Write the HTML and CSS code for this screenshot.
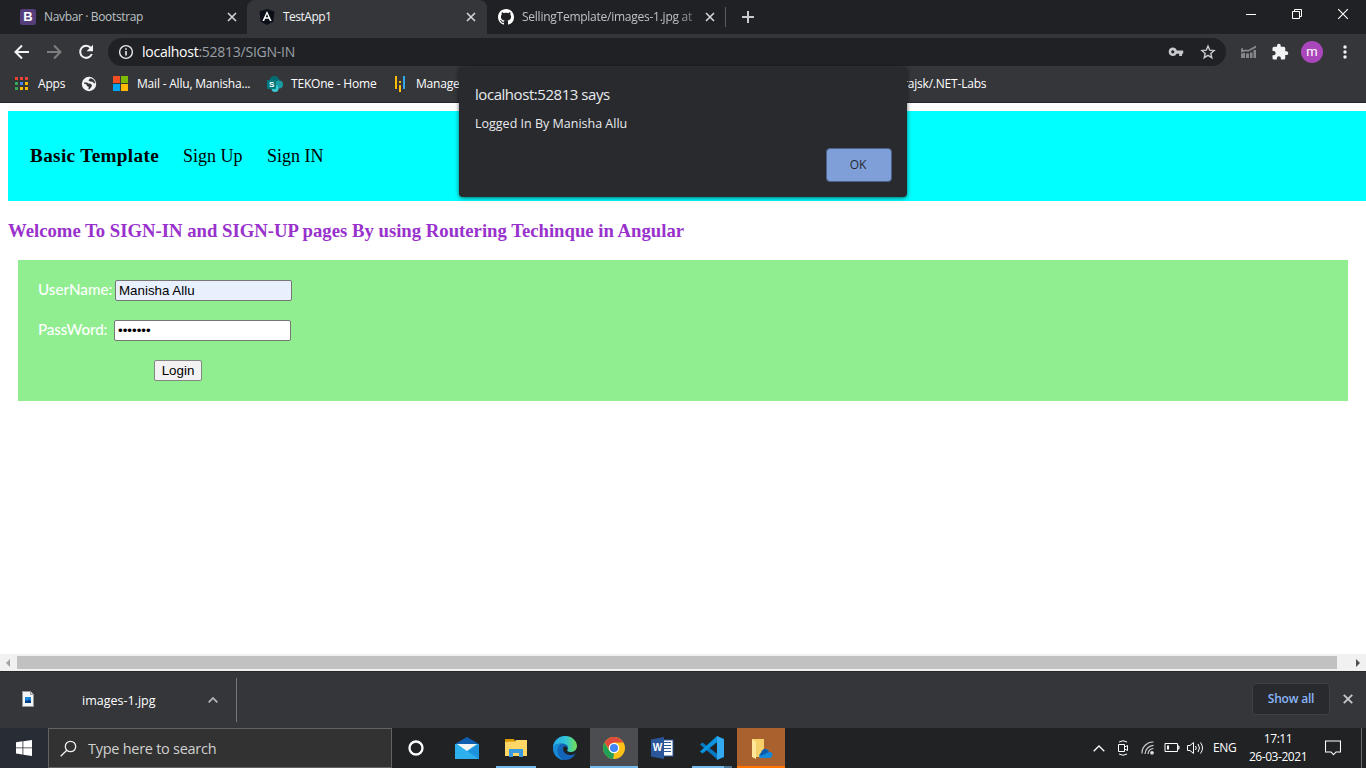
FILE: index.html
```html
<!DOCTYPE html>
<html lang="en">
<head>
<meta charset="utf-8">
<title>TestApp1</title>
<link rel="stylesheet" href="styles.css">
</head>
<body>
<header class="tabs">
  <div class="tab">
    <svg width="16" height="16" viewBox="0 0 16 16"><rect width="16" height="16" rx="2.5" fill="#563d7c"/></svg>
    <b class="boot">B</b><span class="t-nav">Navbar · Bootstrap</span>
    <svg class="x" viewBox="0 0 10 10"><path d="M1 1l8 8M9 1l-8 8"/></svg>
  </div>
  <div class="tab active">
    <svg width="16" height="16" viewBox="0 0 16 16"><path fill="#0b0f18" d="M8 0l7.5 2.6-1.1 10L8 16l-6.400-3.400L.5 2.600z"/><path fill="#fff" fill-rule="evenodd" d="M8 2l4.600 10h-1.800l-.9-2.200H6.100L5.200 12H3.400zM8 5L6.700 8.300h2.600z"/></svg>
    <span class="t-test">TestApp1</span>
    <svg class="x" viewBox="0 0 10 10"><path d="M1 1l8 8M9 1l-8 8"/></svg>
  </div>
  <div class="tab third">
    <svg width="16" height="16" viewBox="0 0 16 16"><path fill="#fff" d="M8 0C3.580 0 0 3.580 0 8c0 3.540 2.290 6.530 5.470 7.590.4.070.55-.17.55-.38 0-.19-.01-.82-.01-1.490-2.010.37-2.530-.49-2.690-.94-.09-.23-.48-.94-.82-1.130-.28-.15-.68-.52-.01-.53.63-.01 1.080.58 1.230.82.72 1.210 1.870.87 2.330.66.070-.52.28-.87.510-1.070-1.780-.2-3.640-.89-3.640-3.950 0-.87.310-1.590.82-2.150-.08-.2-.36-1.020.08-2.120 0 0 .67-.21 2.200.82.640-.18 1.320-.27 2-.27s1.360.09 2 .27c1.530-1.040 2.200-.82 2.200-.82.44 1.100.16 1.920.08 2.120.51.56.82 1.270.82 2.150 0 3.070-1.870 3.750-3.650 3.950.29.25.54.73.54 1.480 0 1.070-.01 1.930-.01 2.200 0 .21.15.46.55.38A8.010 8.010 0 0 0 16 8c0-4.420-3.580-8-8-8z"/></svg>
    <span class="t-sell">SellingTemplate/images-1.jpg at</span>
    <svg class="x" viewBox="0 0 10 10"><path d="M1 1l8 8M9 1l-8 8"/></svg>
  </div>
  <i class="tabsep"></i>
  <svg class="plus" width="12" height="12" viewBox="0 0 12 12"><path d="M6 0v12M0 6h12" stroke="#c8cacd" stroke-width="2"/></svg>
  <div class="win">
    <svg width="46" height="28"><path d="M18 14.500h10" stroke="#fff"/></svg>
    <svg width="46" height="28" fill="none" stroke="#fff"><path d="M18.500 11.500h7v7h-7zM20.500 11.500v-2h7v7h-2"/></svg>
    <svg width="46" height="28"><path d="M18.200 9.200l9.600 9.600M27.800 9.200l-9.600 9.600" stroke="#fff" stroke-width="1.100"/></svg>
  </div>
</header>
<div class="toolbar">
  <svg class="navi" viewBox="0 0 32 32"><path d="M23 16H10M16 9.500L9.500 16l6.500 6.500" fill="none" stroke="#f1f3f4" stroke-width="2"/></svg>
  <svg class="navi" viewBox="0 0 32 32"><path d="M9 16h13M16 9.500l6.500 6.500-6.500 6.500" fill="none" stroke="#7d7e80" stroke-width="2"/></svg>
  <svg class="navi" viewBox="0 0 32 32"><path d="M20.800 12A6 6 0 1 0 21.800 18" fill="none" stroke="#f1f3f4" stroke-width="2"/><path d="M23 8.800v6.500h-6.500z" fill="#f1f3f4"/></svg>
  <div class="omni">
    <svg width="16" height="16" viewBox="0 0 16 16"><circle cx="8" cy="8" r="6.400" fill="none" stroke="#e8eaed" stroke-width="1.400"/><path d="M8 7v4.500M8 4.300v1.500" stroke="#e8eaed" stroke-width="1.600"/></svg>
    <span class="url"><b>localhost</b>:52813/SIGN-IN</span>
    <svg class="key" width="16" height="16" viewBox="0 0 16 16"><path fill="#c8cacd" fill-rule="evenodd" d="M4.800 3.500a4.200 4.200 0 0 1 4 3H15.200v3.200H14V12h-2.800V9.700H8.600a4.200 4.200 0 1 1-3.800-6.200zm0 2.700a1.600 1.600 0 1 0 0 3.200 1.600 1.600 0 0 0 0-3.200z"/></svg>
    <svg width="16" height="16" viewBox="0 0 16 16"><path fill="none" stroke="#c8cacd" stroke-width="1.400" d="M8 2l1.700 4.100 4.400.4-3.300 2.900 1 4.300L8 11.400l-3.800 2.300 1-4.300-3.300-2.900 4.400-.4z"/></svg>
  </div>
  <svg class="ext" width="16" height="16" viewBox="0 0 16 16"><path fill="#85878a" d="M1 9.500L5 8.800V14H1zM6 9.500h3V14H6zM10 8.500h2.500V14H10zM13.500 6H16v8h-2.500zM1 4.500L3 4v2l3.500-.5 1.500.5 8-4.500v2.200L8 7.700l-2-.5-5 1.300z"/></svg>
  <svg class="puz" width="18" height="18" viewBox="0 0 24 24"><path fill="#f1f3f4" d="M20.500 11H19V7a2 2 0 0 0-2-2h-4V3.500a2.500 2.500 0 0 0-5 0V5H4a2 2 0 0 0-2 2v3.800h1.500a2.700 2.700 0 0 1 0 5.400H2V20a2 2 0 0 0 2 2h3.800v-1.500a2.700 2.700 0 0 1 5.400 0V22H17a2 2 0 0 0 2-2v-4h1.500a2.500 2.500 0 0 0 0-5z"/></svg>
  <div class="avatar">m</div>
  <svg class="dots" width="4" height="14" fill="#f1f3f4"><circle cx="2" cy="2" r="1.700"/><circle cx="2" cy="7" r="1.700"/><circle cx="2" cy="12" r="1.700"/></svg>
</div>
<div class="marks">
  <svg class="grid" width="13" height="14"><path fill="#ea4335" d="M0 0h3v3H0zM5 0h3v3H5zM10 0h3v3h-3z"/><path fill="#34a853" d="M0 5h3v3H0z"/><path fill="#4285f4" d="M5 5h3v3H5z"/><path fill="#fbbc05" d="M10 5h3v3h-3zM5 10h3v3H5zM10 10h3v3h-3z"/><path fill="#34a853" d="M0 10h3v3H0z"/></svg>
  <span class="m-apps">Apps</span>
  <svg class="globe" width="16" height="16" viewBox="0 0 16 16"><circle cx="8" cy="8" r="7.200" fill="#f1f3f4"/><path fill="#35363a" d="M3 6.500h3l1.500 1 2 .2 1.500 1.300-.5 1.800-2 2.400H7.300L7.800 11 6 10 5.500 8.500 3 7.500zM9 2.200L7.500 4.500 9 5.500l2.500.3 1.500 1.500h1.200C14 4.500 12 2.500 9 2.200z"/></svg>
  <svg class="ms" width="15" height="15"><path fill="#f25022" d="M0 0h7v7H0z"/><path fill="#7fba00" d="M8 0h7v7H8z"/><path fill="#00a4ef" d="M0 8h7v7H0z"/><path fill="#ffb900" d="M8 8h7v7H8z"/></svg>
  <span class="m-mail">Mail - Allu, Manisha...</span>
  <span class="sp"><svg width="16" height="16" viewBox="0 0 16 16"><circle cx="7.500" cy="5" r="5" fill="#036c70"/><circle cx="12" cy="8.500" r="4" fill="#1a9ba1"/><circle cx="8" cy="12.500" r="3.500" fill="#37c6d0"/><rect y="4" width="9" height="9" rx="1" fill="#03787c"/></svg><b>S</b></span>
  <span class="m-tek">TEKOne - Home</span>
  <svg class="bars" width="10" height="16"><path fill="#fbbc05" d="M0 0h2v13H0zM4 5h2v2H4zM4 9h2v7H4z"/><path fill="#35a7e8" d="M8 0h2v13H8z"/></svg>
  <span class="m-man">Manage</span>
  <span class="m-net">rajsk/.NET-Labs</span>
</div>
<main class="page">
  <nav class="sitenav"><b>Basic Template</b><span class="up">Sign Up</span><span class="in">Sign IN</span></nav>
  <h3>Welcome To SIGN-IN and SIGN-UP pages By using Routering Techinque in Angular</h3>
  <form class="login">
    <div class="row"><label class="l-user">UserName:</label><input class="auto" type="text" value="Manisha Allu"></div>
    <div class="row"><label class="l-pass">PassWord:</label><input type="password" value="manisha"></div>
    <button type="button">Login</button>
  </form>
  <div class="hscroll">
    <svg width="17" height="17"><path fill="#a3a3a3" d="M10 5v8L6 9z"/></svg><i></i><svg width="17" height="17"><path fill="#505050" d="M7 5v8l4-4z"/></svg>
  </div>
</main>
<div class="downloads">
  <svg class="file" width="12" height="16"><path fill="#f4f4f4" stroke="#999" d="M.5.5h8l3 3v12H.5z"/><path d="M8.500.5v3h3" fill="#ddd" stroke="#999"/><rect x="3" y="6" width="6" height="6" fill="#1b85d8"/><path d="M3 12V9l2 1 2-1.500L9 10v2z" fill="#093c83"/></svg>
  <span class="d-name">images-1.jpg</span>
  <svg class="chev" width="10" height="6"><path d="M.7 5.300L5 1l4.300 4.300" fill="none" stroke="#b8babd" stroke-width="1.700"/></svg>
  <i></i>
  <div class="showall"><span>Show all</span></div>
  <svg class="dx" width="10" height="10"><path d="M.8.8l8.400 8.400M9.200.8L.8 9.200" stroke="#c5c7ca" stroke-width="1.900"/></svg>
</div>
<footer class="taskbar">
  <div class="start"><svg width="16" height="16"><path fill="#fff" d="M0 2.200L6.500 1.300v6.200H0zM7.300 1.200L16 0v7.500H7.300zM0 8.300h6.500v6.200L0 13.600zM7.300 8.300H16V16l-8.700-1.200z"/></svg></div>
  <div class="search"><svg width="17" height="17" fill="none" stroke="#eee" stroke-width="1.300"><circle cx="10.500" cy="6.500" r="5.200"/><path d="M6.800 10.200L.7 16.300"/></svg><span>Type here to search</span></div>
  <div class="app cort"><svg width="16" height="16"><circle cx="8" cy="8" r="6.500" fill="none" stroke="#fff" stroke-width="2.300"/></svg></div>
  <div class="app mail"><svg width="24" height="24"><path fill="#2eb0ed" d="M0 8h24v15H0z"/><path fill="#0f5eaf" d="M0 8l12-7 12 7z"/><path fill="#1c93dc" d="M24 8v15L12 15z"/><path fill="#f4f4f4" d="M2 8h20l-10 7z"/></svg></div>
  <div class="app folder"><svg width="24" height="24"><path fill="#d99a00" d="M1 3h9l1 2v2H1z"/><path fill="#ffd766" d="M1 6l10-.5L12 4h11v16H1z"/><path fill="#3b9be0" d="M5 13h14v8h-4v-4H9v4H5z"/></svg></div>
  <div class="app edge"><svg width="24" height="24" viewBox="0 0 24 24"><defs><linearGradient id="g1"><stop stop-color="#26a8e8"/><stop offset=".55" stop-color="#32c7d6"/><stop offset="1" stop-color="#75df4d"/></linearGradient></defs><circle cx="12" cy="12" r="12" fill="#1265b8"/><path fill="url(#g1)" d="M0 11C1 4 6 0 12 0c7 0 12 5 12 10 0 4-3 6-6.500 6-3 0-4-1.200-3-2.400C16.500 10 13 7.500 9 7.500c-4 0-8 2-9 5z"/><path fill="#1889d5" d="M0 12c1-4 4.500-5 8-4-5 3-5 11 2 16C4 23 0 18 0 12z"/><path fill="#202326" d="M10.500 11c-1.500 3 .5 7.500 6 8 3 .2 5-.5 6.300-1.500L25 16v-5h-1c-1 4-3 5-6.500 5-3 0-4-1.200-3-2.400 1-2-2.500-4.600-4-2.600z"/></svg></div>
  <div class="app chrome"><svg width="22" height="22" viewBox="0 0 22 22"><circle cx="11" cy="11" r="11" fill="#fbc116"/><path fill="#de4b3c" d="M1.500 5.500a11 11 0 0 1 19 0H11l-4 8z"/><path fill="#21a157" d="M1.500 5.500L6.300 13.700 11 16.400 10.200 22A11 11 0 0 1 1.500 5.500z"/><circle cx="11" cy="11" r="5.300" fill="#fff"/><circle cx="11" cy="11" r="4" fill="#4285f4"/></svg></div>
  <div class="app word"><svg width="23" height="22"><rect x="10" y="3" width="12" height="16" fill="#fff" stroke="#2b579a"/><path stroke="#2b579a" d="M13 5.500h7M13 8.500h7M13 11.500h7M13 14.500h7"/><path fill="#2b579a" d="M0 2.500L13 0v22L0 19.500z"/></svg><b>W</b></div>
  <div class="app code"><svg width="24" height="24" viewBox="0 0 24 24"><path fill="#087ac4" d="M0 8.500L2.500 6.500 18 18.500V24z"/><path fill="#0a93df" d="M0 15.500L17 0l1 5.500L2.500 17.500z"/><path fill="#33a9ef" d="M17 0l7 3v18l-7 3z"/></svg></div>
  <div class="app drive"><svg width="24" height="24"><path fill="#f5cf67" d="M3 3h12v18H3z"/><path fill="#ffe69b" d="M3 3l4 3v17l-4-2z"/><path fill="#1689d8" d="M11 22c-2-2-.5-5 2-5 1-5 6-5 7-1 3-.3 3.500 1.500 3.500 3S22 22 20.500 22z"/><path fill="#0b5cad" d="M12 17c1-5 6-5 8-1l-8 4c-1-1-1-3 0-3z"/></svg></div>
  <div class="tray">
    <svg class="up1" width="12" height="7"><path d="M.7 6.200L6 1l5.300 5.200" fill="none" stroke="#fff" stroke-width="1.300"/></svg>
    <svg class="meet" width="12" height="16" fill="none" stroke="#fff"><path d="M2 2q4-2.500 8 0M2 14q4 2.500 8 0M1.500 4.500h6v7h-6zM7.500 7l3-1.500v5L7.500 9"/></svg>
    <svg class="wifi" width="14" height="14" fill="none" stroke="#ccc" stroke-width="1.200"><path d="M1 12.500A11 11 0 0 1 12.500 1M4 13A9 9 0 0 1 12.500 4.300M7 13a6 6 0 0 1 5.500-5.500"/><circle cx="11" cy="11.800" r="1.300" fill="#fff"/></svg>
    <svg class="bat" width="16" height="10" fill="none" stroke="#fff"><path d="M1 .5h12.500v8H1zM14 3h1v3h-1z"/><path fill="#fff" stroke="none" d="M3 2.500h2v4H3z"/></svg>
    <svg class="vol" width="17" height="14" fill="none" stroke="#fff"><path d="M.5 4.500h2.500L6.500 1.500v11L3 9.500H.5zM8.500 5q1.500 2 0 4M11 3q3 4 0 8M13.500 1.500q4 5.500 0 11"/></svg>
    <span class="eng">ENG</span>
    <div class="clock"><span class="time">17:11</span><span class="date">26-03-2021</span></div>
    <svg class="note" width="16" height="16"><path d="M.5 1h15v11H11l-2.500 2.700L6 12H.5z" fill="none" stroke="#fff" stroke-width="1.100"/></svg>
    <i class="peek"></i>
  </div>
</footer>
<div class="dialog">
  <p class="says">localhost:52813 says</p>
  <p class="msg">Logged In By Manisha Allu</p>
  <div class="ok">OK</div>
</div>
</body>
</html>
```
FILE: styles.css
```css
* { box-sizing: border-box; }
body { margin: 0; width: 1366px; height: 768px; overflow: hidden; display: flex; flex-direction: column; position: relative; background: #fff; font: 12px/16px "Open Sans", "Noto Sans", sans-serif; color: #fff; }
svg { display: block; flex: none; }
span { white-space: nowrap; display: block; flex: none; }

.tabs { height: 34px; flex: none; display: flex; background: #202124; }
.tab { width: 247px; height: 34px; padding: 0 10px 0 20px; display: flex; align-items: center; color: #bdc1c6; position: relative; }
.tab span { margin-left: 8px; }
.tab.active { width: 240px; padding-left: 12px; background: #35363a; border-radius: 8px 8px 0 0; color: #f1f3f4; }
.tab.third { width: 238px; padding: 0 10px 0 11px; }
.tab .x { width: 10px; height: 10px; margin-left: auto; }
.tab .x path { stroke: #d5d7da; stroke-width: 1.6; }
.tab.active .x { margin-right: 1px; }
.boot { position: absolute; left: 20px; width: 16px; text-align: center; color: #fff; font: bold 13px/16px "Liberation Sans", sans-serif; }
.t-nav { letter-spacing: -.35px; }
.t-test { letter-spacing: -.5px; }
.t-sell { letter-spacing: -.25px; -webkit-mask-image: linear-gradient(90deg, #000 90%, rgba(0,0,0,.5)); mask-image: linear-gradient(90deg, #000 90%, rgba(0,0,0,.5)); }
.tabsep { width: 1px; height: 20px; margin-top: 7px; background: #5b5d61; }
.plus { margin: 11px 0 0 16px; }
.win { margin-left: auto; display: flex; }

.toolbar { height: 36px; flex: none; padding-left: 6px; display: flex; align-items: center; background: #35363a; }
.navi { width: 32px; height: 32px; }
.omni { width: 1118px; height: 28px; margin-left: 6px; padding: 0 10px; border-radius: 14px; display: flex; align-items: center; background: #202124; }
.url { margin-left: 8px; font-size: 14px; letter-spacing: -.25px; color: #9aa0a6; }
.url b { font-weight: 400; color: #fff; }
.key { margin: 0 16px 0 auto; }
.ext { margin-left: 14px; }
.puz { margin-left: 15px; }
.avatar { width: 22px; height: 22px; margin-left: 12px; border-radius: 50%; background: #ab47bc; text-align: center; font: 13px/21px Roboto, sans-serif; }
.dots { margin-left: 20px; }

.marks { height: 33px; flex: none; padding: 0 0 5px 15px; border-bottom: 1px solid #252629; display: flex; align-items: center; background: #35363a; color: #fff; }
.marks span { letter-spacing: -.2px; }
.m-apps { width: 27px; margin-left: 10px; }
.globe { margin-left: 16px; }
.ms { margin-left: 16px; }
.m-mail { width: 114px; margin-left: 9px; }
.sp { width: 16px; margin-left: 16px; position: relative; }
.sp b { position: absolute; left: 2px; top: 4px; font: bold 8px/9px "Liberation Sans", sans-serif; }
.m-tek { width: 85px; margin-left: 8px; }
.bars { margin-left: 19px; }
.m-man { width: 43px; margin-left: 11px; }
.m-net { margin-left: 444px; }

.page { height: 568px; flex: none; padding-top: 8px; display: flex; flex-direction: column; color: #000; font-family: "Liberation Serif", serif; }
.sitenav { height: 90px; flex: none; margin-left: 8px; padding: 35px 0 0 22px; display: flex; align-items: baseline; background: #0ff; font-size: 18px; line-height: 20px; }
.sitenav b { width: 153px; font-size: 19.2px; letter-spacing: .35px; }
.sitenav .up { width: 84px; }
h3 { margin: 20px 8px 19px; font-size: 18.72px; line-height: 20px; color: #9932cc; white-space: nowrap; }
.login { height: 141px; flex: none; margin: 0 18px; padding: 20px; background: #90ee90; }
.row { display: flex; height: 40px; align-items: flex-start; color: #fff; font: 500 15.2px/19px Lato, sans-serif; }
.l-user { width: 77px; }
.l-pass { width: 76px; letter-spacing: -.1px; }
input { width: 177px; height: 21px; margin: 0; padding: 1px 3px; border: 1px solid #767676; border-radius: 2px; background: #fff; font: 13.333px "Liberation Sans", sans-serif; color: #000; }
.auto { background: #e8f0fe; }
button { display: block; width: 48px; height: 21px; margin-left: 116px; padding: 0; border: 1px solid #858585; border-radius: 2px; background: #f2f2f2; font: 13.333px "Liberation Sans", sans-serif; color: #000; }
.hscroll { height: 17px; margin-top: auto; display: flex; align-items: center; background: #f1f1f1; }
.hscroll i { width: 1320px; height: 13px; background: #c1c1c1; }
.hscroll svg:last-child { margin-left: 12px; }

.downloads { height: 57px; flex: none; padding-left: 22px; border-top: 1px solid #27282b; display: flex; align-items: center; background: #35363a; }
.file { margin-bottom: 2px; }
.d-name { width: 75px; margin: 1px 0 0 48px; font-size: 12.5px; }
.chev { margin-left: 51px; }
.downloads i { width: 1px; height: 44px; margin-left: 18px; background: #77787c; }
.showall { width: 78px; height: 32px; margin: 0 0 2px 1015px; border: 1px solid #404145; border-radius: 4px; display: flex; align-items: center; justify-content: center; background: #292a2d; color: #8ab4f8; font-weight: 600; letter-spacing: -.2px; }
.dx { margin-left: 13px; margin-bottom: 2px; }

.taskbar { height: 40px; flex: none; display: flex; background: #212224; }
.start { width: 48px; padding: 12px 16px; background: #282c35; }
.search { width: 344px; padding-left: 11px; border: 1px solid #626262; display: flex; align-items: center; background: #323232; color: #d0d0d0; font-size: 14.5px; }
.search span { margin: 1px 0 0 11px; letter-spacing: -.27px; }
.app { width: 48px; height: 40px; padding-top: 1px; display: flex; align-items: center; justify-content: center; border-bottom: 2px solid transparent; position: relative; }
.app.mail { width: 54px; }
.app.folder { width: 40px; margin-left: 2px; border-color: #76b9ed; }
.app.edge { width: 50px; margin-left: 4px; }
.app.chrome { background: #4b4d51; border-color: #76b9ed; }
.app.code { width: 40px; margin-left: 6px; border-image: linear-gradient(90deg, #76b9ed 78%, #4b7697 78%) 2; }
.app.drive { margin-left: 5px; background: #a9622d; border-color: #ff7300; }
.word b { position: absolute; left: 14px; width: 11px; text-align: center; font: bold 10px/22px "Liberation Sans", sans-serif; }
.tray { margin-left: auto; width: 273px; display: flex; align-items: center; }
.meet { margin-left: 12px; }
.wifi { margin-left: 12px; }
.bat { margin-left: 9px; }
.vol { margin-left: 7px; }
.eng { width: 24px; margin-left: 9px; letter-spacing: -.4px; }
.clock { width: 60px; margin-left: 11px; line-height: 18px; display: flex; flex-direction: column; align-items: center; letter-spacing: -.45px; }
.note { margin-left: 17px; }
.peek { width: 1px; height: 40px; margin-left: 20px; background: #6b6b6b; }

.dialog { position: absolute; left: 459px; top: 67px; width: 448px; height: 130px; padding: 17px 15px 17px 16px; border-radius: 4px; background: #292a2d; color: #e8eaed; box-shadow: 0 1px 4px rgba(0,0,0,.6); }
.dialog p { margin: 0; white-space: nowrap; }
.says { font-size: 15px; line-height: 20px; letter-spacing: -.45px; }
.dialog .msg { margin-top: 12px; font-size: 12.5px; letter-spacing: 0; }
.ok { width: 66px; height: 34px; margin: 16px 0 0 auto; padding-right: 2px; border: 1px solid #4d6189; border-radius: 4px; background: #7f9fd9; color: #25282d; text-align: center; line-height: 32px; }
```
